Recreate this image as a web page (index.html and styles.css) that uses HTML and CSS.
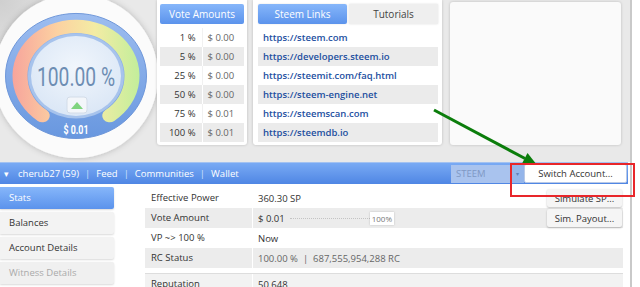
FILE: index.html
```html
<!DOCTYPE html>
<html lang="en">
  <head>
    <meta charset="UTF-8" />
    <title>Steem Account</title>
    <link rel="stylesheet" href="styles.css">
  </head>
  <body>
    <div class="page">
      <div class="top">
        <div class="gauge">
          <svg width="157" height="162" viewBox="0 0 157 162">
            <defs>
              <filter id="soft" x="-20%" y="-20%" width="140%" height="140%">
                <feDropShadow dx="0" dy="0" stdDeviation="3" flood-color="#000" flood-opacity="0.22" />
              </filter>
              <linearGradient id="ring" x1="0" y1="0" x2="0" y2="1">
                <stop offset="0" stop-color="#9dbdf0" />
                <stop offset="1" stop-color="#6897df" />
              </linearGradient>
              <linearGradient id="heat" gradientUnits="userSpaceOnUse" x1="8" y1="0" x2="134" y2="0">
                <stop offset="0" stop-color="#f7a59c" />
                <stop offset="0.35" stop-color="#fcd1a1" />
                <stop offset="0.65" stop-color="#f3eca4" />
                <stop offset="1" stop-color="#c3ee9b" />
              </linearGradient>
              <radialGradient id="face" cx="0.5" cy="0.4" r="0.6">
                <stop offset="0" stop-color="#f1f6fc" />
                <stop offset="1" stop-color="#dbe7f6" />
              </radialGradient>
            </defs>
            <circle cx="76" cy="76" r="82" fill="#fbfbfb" filter="url(#soft)" />
            <g transform="translate(5 13) scale(1 0.887)">
              <circle cx="71" cy="71" r="70.5" fill="url(#ring)" stroke="#6a94d8" />
              <path d="M37.3 115.7 A56 56 0 1 1 104.7 115.7" fill="none" stroke="url(#heat)" stroke-width="15" stroke-linecap="round" />
              <circle cx="71" cy="71" r="48" fill="#a7c3ec" />
              <circle cx="71" cy="71" r="45" fill="url(#face)" />
            </g>
            <text class="pct" x="76" y="86" text-anchor="middle" textLength="78" lengthAdjust="spacingAndGlyphs">100.00 %</text>
            <rect x="67" y="97" width="20" height="16" rx="3" fill="#f3f6fa" stroke="#d3dce8" />
            <polygon points="71,109 77,102 83,109" fill="#7fd47f" />
            <text class="usd" x="76" y="134" text-anchor="middle" textLength="25" lengthAdjust="spacingAndGlyphs">$ 0.01</text>
          </svg>
        </div>

        <div class="card votes">
          <div class="btn-blue head">Vote Amounts</div>
          <table class="amounts">
            <tr><td>1 %</td><td>$ 0.00</td></tr>
            <tr><td>5 %</td><td>$ 0.00</td></tr>
            <tr><td>25 %</td><td>$ 0.00</td></tr>
            <tr><td>50 %</td><td>$ 0.00</td></tr>
            <tr><td>75 %</td><td>$ 0.01</td></tr>
            <tr><td>100 %</td><td>$ 0.01</td></tr>
          </table>
        </div>

        <div class="card links">
          <div class="tabs">
            <div class="tab active">Steem Links</div>
            <div class="tab">Tutorials</div>
          </div>
          <ul class="link-list">
            <li><a href="#">https://steem.com</a></li>
            <li><a href="#">https://developers.steem.io</a></li>
            <li><a href="#">https://steemit.com/faq.html</a></li>
            <li><a href="#">https://steem-engine.net</a></li>
            <li><a href="#">https://steemscan.com</a></li>
            <li><a href="#">https://steemdb.io</a></li>
          </ul>
        </div>

        <div class="card blank"></div>
      </div>

      <div class="bar">
        <div class="nav">
          <span class="caret">▾</span>
          <span>cherub27 (59)</span>
          <span class="sep">|</span>
          <span>Feed</span>
          <span class="sep">|</span>
          <span>Communities</span>
          <span class="sep">|</span>
          <span>Wallet</span>
        </div>
        <div class="bar-right">
          <div class="coin">STEEM</div>
          <div class="coin-arrow">▾</div>
          <div class="switch">Switch Account...</div>
        </div>
      </div>

      <div class="main">
        <ul class="menu">
          <li class="active">Stats</li>
          <li>Balances</li>
          <li>Account Details</li>
          <li class="disabled">Witness Details</li>
        </ul>

        <div class="stats">
          <div class="row">
            <span class="label">Effective Power</span>
            <span class="value">360.30 SP</span>
            <button type="button">Simulate SP...</button>
          </div>
          <div class="row">
            <span class="label">Vote Amount</span>
            <span class="value">$ 0.01 <span class="slider"></span><span class="knob">100%</span></span>
            <button type="button">Sim. Payout...</button>
          </div>
          <div class="row">
            <span class="label">VP ~&gt; 100 %</span>
            <span class="value">Now</span>
          </div>
          <div class="row">
            <span class="label">RC Status</span>
            <span class="value muted">100.00 % &nbsp;|&nbsp; 687,555,954,288 RC</span>
          </div>
          <div class="row extra">
            <span class="label">Reputation</span>
            <span class="value">50.648</span>
          </div>
        </div>
      </div>

      <svg class="pointer" width="640" height="287" viewBox="0 0 640 287">
        <line x1="434" y1="110" x2="525" y2="158.5" stroke="#0b7d0b" stroke-width="3" />
        <polygon points="537,165 521.9,163.7 527.5,153.1" fill="#0b7d0b" />
      </svg>
      <div class="highlight"></div>
    </div>
  </body>
</html>
```

FILE: styles.css
```css
* {
  margin: 0;
  padding: 0;
  box-sizing: border-box;
  font-family: "Open Sans", sans-serif;
}

body {
  width: 640px;
  height: 287px;
  overflow: hidden;
  background: #fff;
  color: #333;
}

.page {
  position: relative;
  width: 632px;
  height: 287px;
  border-right: 2px solid #c9c9c9;
}

.top {
  display: flex;
  height: 162px;
  background: radial-gradient(circle at 0 0, #cfcfcf 0, #e9e9e9 80px);
}

.gauge {
  width: 157px;
  flex: none;
}

.gauge svg {
  display: block;
}

.pct {
  font-family: Roboto, sans-serif;
  font-size: 26px;
  fill: #6d8db3;
}

.usd {
  font-family: Roboto, sans-serif;
  font-size: 12px;
  font-weight: bold;
  fill: #fff;
}

.card {
  flex: none;
  height: 145px;
  background: #fff;
  border-radius: 0 0 3px 3px;
  box-shadow: 0 0 3px rgba(0, 0, 0, 0.2);
}

.btn-blue,
.tab.active {
  color: #fff;
  background: linear-gradient(#86b6fa, #5b93ec);
  border-radius: 2px;
}

.votes {
  width: 90px;
  padding: 4px 3px 0;
}

.head {
  height: 20px;
  line-height: 20px;
  text-align: center;
  font-size: 10px;
}

.amounts {
  width: 100%;
  margin-top: 4px;
  border-collapse: collapse;
  font-size: 9.5px;
}

.amounts td {
  height: 19px;
  padding: 0;
}

.amounts td:first-child {
  width: 42px;
  text-align: right;
  padding-right: 6px;
}

.amounts td:last-child {
  padding-left: 5px;
  color: #666;
  border-left: 1px solid #f1f1f1;
}

.amounts tr:nth-child(even) td {
  background: #ebebeb;
}

.amounts tr:nth-child(even) td:last-child {
  border-left-color: #fff;
}

.links {
  width: 189px;
  margin-left: 6px;
  padding: 4px 4px 0 5px;
}

.tabs {
  display: flex;
  gap: 2px;
}

.tab {
  width: 89px;
  height: 20px;
  line-height: 20px;
  font-size: 10px;
  text-align: center;
  color: #444;
  background: #efefef;
  box-shadow: 0 0 2px rgba(0, 0, 0, 0.12);
}

.link-list {
  list-style: none;
  margin-top: 4px;
}

.link-list li {
  height: 19px;
  line-height: 19px;
  padding-left: 5px;
  font-size: 9.5px;
}

.link-list li:nth-child(even) {
  background: #ebebeb;
}

.link-list a {
  color: #1d4f9f;
  font-weight: 600;
  text-decoration: none;
}

.blank {
  width: 171px;
  height: 143px;
  margin: 2px 0 0 8px;
  background: #fafafa;
  border-radius: 3px;
}

.bar {
  display: flex;
  align-items: center;
  width: 628px;
  height: 22px;
  padding-left: 4px;
  color: #fff;
  font-size: 9.5px;
  background: linear-gradient(#79aaf4, #4f86e4);
  border-top: 1px solid #a3c2f1;
}

.nav {
  display: flex;
  align-items: center;
  gap: 6px;
}

.caret {
  font-size: 9px;
  margin-right: 3px;
}

.sep {
  color: #cfe0fb;
}

.bar-right {
  display: flex;
  align-items: center;
  margin-left: auto;
  margin-right: 1px;
}

.coin {
  width: 60px;
  height: 18px;
  line-height: 18px;
  padding-left: 5px;
  color: #7f98c4;
  background: #a9c3ee;
}

.coin-arrow {
  width: 13px;
  height: 18px;
  line-height: 18px;
  font-size: 6px;
  text-align: center;
  color: #5f7fb8;
  background: #94b5ea;
}

.switch {
  width: 103px;
  height: 19px;
  line-height: 18px;
  text-align: center;
  color: #333;
  background: #fff;
  border: 1px solid #b9c9e6;
  border-radius: 2px;
}

.main {
  display: flex;
  padding-top: 3px;
}

.menu {
  display: flex;
  flex-direction: column;
  gap: 3px;
  width: 114px;
  list-style: none;
}

.menu li {
  height: 22px;
  line-height: 22px;
  padding-left: 9px;
  font-size: 9.5px;
  background: #f3f3f3;
  border-radius: 0 2px 2px 0;
  box-shadow: 0 1px 2px rgba(0, 0, 0, 0.15);
}

.menu li.active {
  color: #fff;
  background: linear-gradient(#86b6fa, #5b93ec);
}

.menu li.disabled {
  color: #aaa;
  background: #f0f0f0;
}

.stats {
  width: 478px;
  margin-left: 31px;
  padding-top: 1px;
  font-size: 9.5px;
}

.row {
  display: grid;
  grid-template-columns: 108px 1fr 76px;
  align-items: center;
  height: 20px;
}

.row:nth-child(even) {
  background: #ececec;
}

.label {
  height: 20px;
  line-height: 20px;
  padding-left: 6px;
  border-right: 1px solid #fff;
}

.value {
  display: flex;
  align-items: center;
  padding-left: 5px;
}

.muted {
  color: #666;
}

.slider {
  width: 80px;
  margin-left: 5px;
  border-top: 1px dotted #c4c4c4;
}

.knob {
  padding: 1px 2px;
  font-size: 8px;
  color: #777;
  background: #fff;
  box-shadow: 0 0 2px rgba(0, 0, 0, 0.2);
}

.row button {
  width: 75px;
  height: 18px;
  border: none;
  border-radius: 2px;
  font-size: 9.5px;
  color: #333;
  background: #f5f5f5;
  box-shadow: 0 1px 2px rgba(0, 0, 0, 0.25);
}

.row.extra {
  margin-top: 5px;
  background: #f2f2f2;
  border-top: 1px solid #ddd;
}

.pointer {
  position: absolute;
  top: 0;
  left: 0;
  pointer-events: none;
}

.highlight {
  position: absolute;
  left: 510px;
  top: 163px;
  width: 125px;
  height: 34px;
  border: 2px solid #e8262a;
}
```
